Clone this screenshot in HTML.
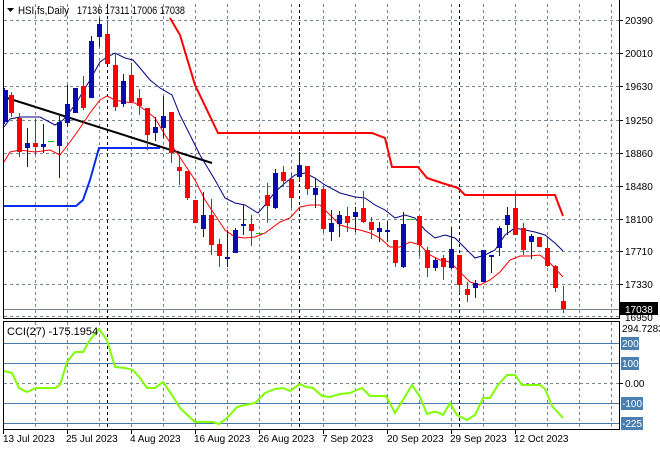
<!DOCTYPE html>
<html><head><meta charset="utf-8"><style>
html,body{margin:0;padding:0;background:#fff;}
svg{display:block;font-family:"Liberation Sans",sans-serif;}
</style></head><body>
<svg width="660" height="450" viewBox="0 0 660 450" xmlns="http://www.w3.org/2000/svg">
<rect width="660" height="450" fill="#fff"/>
<g stroke="#7a8593" stroke-width="1" stroke-dasharray="3,3" fill="none">
<path d="M35.5 4V318M67.5 4V318M99.5 4V318M131.5 4V318M163.5 4V318M195.5 4V318M227.5 4V318M259.5 4V318M291.5 4V318M323.5 4V318M355.5 4V318M387.5 4V318M419.5 4V318M451.5 4V318M483.5 4V318M515.5 4V318M547.5 4V318M579.5 4V318M611.5 4V318"/>
<path d="M35.5 322V429M67.5 322V429M99.5 322V429M131.5 322V429M163.5 322V429M195.5 322V429M227.5 322V429M259.5 322V429M291.5 322V429M323.5 322V429M355.5 322V429M387.5 322V429M419.5 322V429M451.5 322V429M483.5 322V429M515.5 322V429M547.5 322V429M579.5 322V429M611.5 322V429"/>
<path d="M4 20.5H619M4 53.5H619M4 86.5H619M4 120.5H619M4 153.5H619M4 186.5H619M4 219.5H619M4 251.5H619M4 284.5H619M4 316.5H619M4 383.5H619"/>
</g>
<g stroke="#000" stroke-width="1" stroke-dasharray="3,3">
<path d="M107.5 4V429M299.5 4V429M459.5 4V429"/>
</g>
<path d="M4 309.5H619" stroke="#7a8593"/>
<g stroke="#4a78a8" stroke-width="1"><path d="M4 343.5H619M4 363.5H619M4 403.5H619M4 423.5H619"/></g>
<path d="M3.5 0V318.5H619.5V0" stroke="#000" fill="none"/>
<rect x="3.5" y="321.5" width="616" height="108" stroke="#000" fill="none"/>

<polyline points="170,18 180,35 195,85 218,133 372,133 385,138 392,167 418,167 427,178 442,183 458,188 465,195 555,195 563,216" fill="none" stroke="#f00" stroke-width="2"/>
<polyline points="4,206 76,206 83,200 90,180 99,148 160,148" fill="none" stroke="#0a2cf0" stroke-width="2"/>
<line x1="4" y1="97" x2="212" y2="163" stroke="#000" stroke-width="2"/>

<polyline points="4,127 10,119 20,117 40,117 55,125 63,120 75,105 90,80 100,62 107,57 115,53 125,58 133,60 140,68 150,80 160,88 172,95 180,115 190,135 200,155 215,180 225,198 235,203 245,205 258,213 265,205 275,192 285,183 295,175 305,173 315,178 325,185 340,193 355,197 365,198 375,205 385,210 395,218 405,215 415,218 425,230 435,238 445,235 455,238 465,248 475,258 485,255 495,250 505,235 515,228 525,230 535,232 545,235 555,243 563,251" fill="none" stroke="#000080" stroke-width="1"/>
<polyline points="4,162 10,152 20,150 35,152 50,150 60,155 70,142 80,128 90,113 100,100 107,96 115,100 125,102 135,103 145,110 155,118 165,135 175,150 185,165 195,180 205,200 215,215 225,230 235,237 245,238 255,237 265,233 280,222 290,218 300,207 310,205 320,205 330,215 340,225 350,228 360,230 370,233 380,238 390,247 400,247 410,242 420,245 430,255 440,260 450,262 460,272 470,282 480,285 490,280 500,272 510,260 520,256 530,256 540,255 550,263 563,277" fill="none" stroke="#f00" stroke-width="1"/>

<g stroke="#f00" stroke-width="1">
<path d="M11.5 92V117M19.5 113V157M35.5 119V155M83.5 76V110M107.5 21V64M115.5 53V111M131.5 63V103M139.5 89V115M147.5 108V150M171.5 112V163M179.5 155V185M187.5 171V200M195.5 200V223M211.5 199V255M219.5 239V267M251.5 215V246M267.5 183V223M283.5 166V187M291.5 173V208M307.5 166V195M323.5 187V233M347.5 207V232M363.5 191V223M371.5 217V239M395.5 240V267M419.5 216V256M427.5 247V277M443.5 255V280M459.5 255V293M467.5 282V302M515.5 193V235M523.5 223V255M539.5 237V247M547.5 237V267M555.5 265V292M563.5 286V313"/>
</g>
<g stroke="#0a0ab4" stroke-width="1">
<path d="M4.5 88V124M27.5 128V167M43.5 124V153M59.5 115V178M67.5 85V127M75.5 88V113M91.5 36V98M99.5 18V47M123.5 74V107M155.5 117V141M163.5 96V138M203.5 192V237M227.5 230V267M235.5 228V253M243.5 205V235M275.5 169V209M299.5 152V182M315.5 178V208M331.5 210V241M339.5 211V237M355.5 207V232M379.5 222V242M387.5 221V242M403.5 212V268M435.5 258V271M451.5 227V269M475.5 280V298M483.5 250V282M491.5 256V273M499.5 226V256M507.5 207V235M531.5 234V259"/>
</g>
<g fill="#f00">
<rect x="9" y="95" width="5" height="18"/><rect x="17" y="118" width="5" height="34"/><rect x="33" y="143" width="5" height="4"/><rect x="81" y="86" width="5" height="22"/><rect x="105" y="34" width="5" height="30"/><rect x="113" y="65" width="5" height="42"/><rect x="129" y="75" width="5" height="27"/><rect x="137" y="98" width="5" height="8"/><rect x="145" y="108" width="5" height="27"/><rect x="169" y="112" width="5" height="41"/><rect x="177" y="167" width="5" height="4"/><rect x="185" y="171" width="5" height="27"/><rect x="193" y="200" width="5" height="23"/><rect x="209" y="215" width="5" height="30"/><rect x="217" y="244" width="5" height="12"/><rect x="249" y="224" width="5" height="7"/><rect x="265" y="195" width="5" height="11"/><rect x="281" y="172" width="5" height="9"/><rect x="289" y="179" width="5" height="19"/><rect x="305" y="166" width="5" height="23"/><rect x="321" y="189" width="5" height="40"/><rect x="345" y="216" width="5" height="7"/><rect x="361" y="208" width="5" height="14"/><rect x="369" y="222" width="5" height="8"/><rect x="393" y="240" width="5" height="23"/><rect x="417" y="216" width="5" height="29"/><rect x="425" y="250" width="5" height="18"/><rect x="441" y="258" width="5" height="9"/><rect x="457" y="255" width="5" height="30"/><rect x="465" y="289" width="5" height="6"/><rect x="513" y="208" width="5" height="27"/><rect x="521" y="228" width="5" height="22"/><rect x="537" y="237" width="5" height="10"/><rect x="545" y="248" width="5" height="18"/><rect x="553" y="266" width="5" height="22"/><rect x="561" y="301" width="5" height="8"/>
</g>
<g fill="#0a0ab4">
<rect x="4" y="90" width="4" height="32"/><rect x="25" y="143" width="5" height="5"/><rect x="41" y="144" width="5" height="3"/><rect x="57" y="122" width="5" height="24"/><rect x="65" y="104" width="5" height="19"/><rect x="73" y="88" width="5" height="25"/><rect x="89" y="41" width="5" height="57"/><rect x="97" y="24" width="5" height="13"/><rect x="121" y="81" width="5" height="23"/><rect x="153" y="127" width="5" height="6"/><rect x="161" y="116" width="5" height="12"/><rect x="201" y="215" width="5" height="14"/><rect x="225" y="257" width="5" height="2"/><rect x="233" y="230" width="5" height="23"/><rect x="241" y="224" width="5" height="2"/><rect x="273" y="173" width="5" height="35"/><rect x="297" y="165" width="5" height="12"/><rect x="313" y="188" width="5" height="7"/><rect x="329" y="223" width="5" height="9"/><rect x="337" y="215" width="5" height="9"/><rect x="353" y="212" width="5" height="5"/><rect x="377" y="228" width="5" height="4"/><rect x="385" y="230" width="5" height="2"/><rect x="401" y="224" width="5" height="43"/><rect x="433" y="260" width="5" height="8"/><rect x="449" y="249" width="5" height="19"/><rect x="473" y="283" width="5" height="5"/><rect x="481" y="250" width="5" height="32"/><rect x="489" y="255" width="5" height="2"/><rect x="497" y="228" width="5" height="20"/><rect x="505" y="215" width="5" height="10"/><rect x="529" y="236" width="5" height="6"/>
</g>
<g stroke="#00c000"><path d="M48 141.5H54M256 233.5H262M408 219.5H414"/></g>

<polyline points="4,371 12,373 19,388 27,392 36,388 45,388 55,388 60,385 67,362 75,352 83,352 90,340 99,329 107,340 115,367 125,368 133,370 140,378 147,388 155,388 163,382 172,395 180,408 195,422 213,422 219,424 227,418 237,407 245,405 255,403 265,393 275,389 283,388 290,391 300,384 306,387 313,388 322,396 330,397 340,394 350,393 357,390 362,388 370,396 386,396 395,413 403,400 412,385 420,397 427,414 433,412 437,412 443,415 450,403 457,415 467,420 475,415 483,398 490,398 498,385 507,375 515,375 522,385 540,385 545,389 552,406 563,418" fill="none" stroke="#7fff00" stroke-width="2"/>

<path d="M7 8H14L10.5 12Z" fill="#000"/>
<text x="18" y="14" font-size="11" fill="#000" textLength="51" lengthAdjust="spacingAndGlyphs">HSI,fs,Daily</text>
<text x="77" y="14" font-size="11" fill="#000" textLength="108" lengthAdjust="spacingAndGlyphs">17136 17311 17006 17038</text>
<text x="7" y="335" font-size="11" fill="#000">CCI(27) -175.1954</text>

<g font-size="10" fill="#000">
<g stroke="#000"><path d="M619 20.5H623M619 53.5H623M619 86.5H623M619 120.5H623M619 153.5H623M619 186.5H623M619 219.5H623M619 251.5H623M619 284.5H623M619 383.5H623"/></g>
<text x="625" y="24">20390</text><text x="625" y="57">20010</text><text x="625" y="90">19630</text><text x="625" y="124">19250</text><text x="625" y="157">18860</text><text x="625" y="190">18480</text><text x="625" y="223">18100</text><text x="625" y="255">17710</text><text x="625" y="288">17330</text><text x="625" y="321">16950</text>
<rect x="620" y="302" width="38" height="13" fill="#000"/>
<text x="625" y="313" fill="#fff">17038</text>
<text x="622" y="332">294.7283</text>
<rect x="621" y="337" width="18" height="13" fill="#4a7fb0"/><text x="622" y="347" fill="#fff">200</text>
<rect x="621" y="357" width="18" height="13" fill="#4a7fb0"/><text x="622" y="367" fill="#fff">100</text>
<text x="625" y="387">0.00</text>
<rect x="621" y="397" width="22" height="13" fill="#4a7fb0"/><text x="622" y="407" fill="#fff">-100</text>
<rect x="621" y="417" width="22" height="13" fill="#4a7fb0"/><text x="622" y="427" fill="#fff">-225.0015</text>
</g>

<g stroke="#000"><path d="M3.5 429V434M67.5 429V434M131.5 429V434M195.5 429V434M259.5 429V434M323.5 429V434M387.5 429V434M451.5 429V434M515.5 429V434"/></g>
<g font-size="10" fill="#000">
<text x="3" y="442">13 Jul 2023</text><text x="66" y="442">25 Jul 2023</text><text x="130" y="442">4 Aug 2023</text><text x="194" y="442">16 Aug 2023</text><text x="258" y="442">26 Aug 2023</text><text x="322" y="442">7 Sep 2023</text><text x="387" y="442">20 Sep 2023</text><text x="450" y="442">29 Sep 2023</text><text x="514" y="442">12 Oct 2023</text>
</g>
</svg>
</body></html>
